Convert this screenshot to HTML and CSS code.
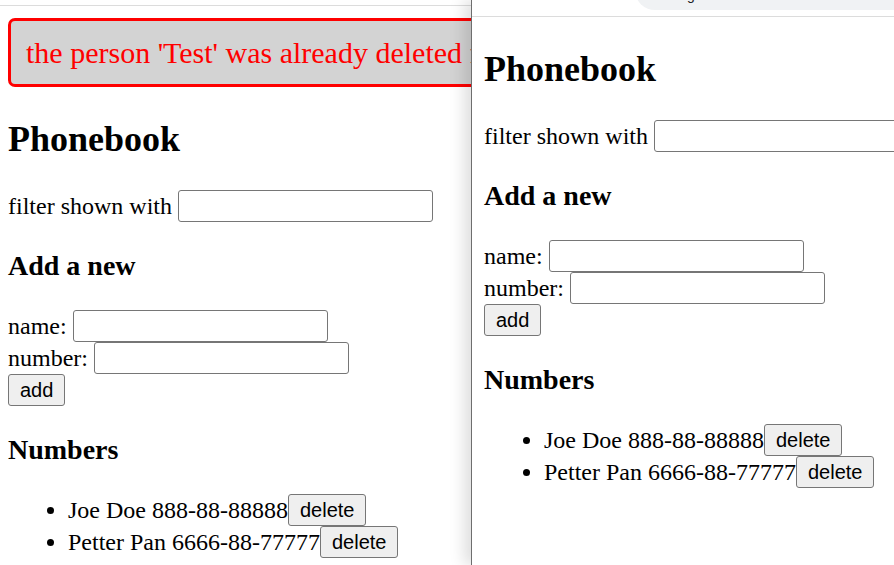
FILE: index.html
```html
<!DOCTYPE html>
<html lang="en">
<head>
<meta charset="utf-8">
<title>Phonebook</title>
<link rel="stylesheet" href="styles.css">
</head>
<body>
<div class="desk">
  <section class="win win-left">
    <div class="bar bar-left"></div>
    <main class="page page-left">
      <div class="error">the person 'Test' was already deleted from server</div>
      <h2>Phonebook</h2>
      <div class="row filter"><span>filter shown with</span><input class="field" type="text"></div>
      <h3>Add a new</h3>
      <form class="form">
        <div class="row"><span>name:</span><input class="field" type="text"></div>
        <div class="row"><span>number:</span><input class="field" type="text"></div>
        <div class="row"><button class="btn" type="button">add</button></div>
      </form>
      <h3>Numbers</h3>
      <ul class="list">
        <li><div class="item"><span>Joe Doe 888-88-88888</span><button class="btn" type="button">delete</button></div></li>
        <li><div class="item"><span>Petter Pan 6666-88-77777</span><button class="btn" type="button">delete</button></div></li>
      </ul>
    </main>
  </section>

  <section class="win win-right">
    <div class="bar bar-right">
      <div class="omnibox"><span class="url">g</span></div>
    </div>
    <main class="page page-right">
      <h2>Phonebook</h2>
      <div class="row filter"><span>filter shown with</span><input class="field" type="text"></div>
      <h3>Add a new</h3>
      <form class="form">
        <div class="row"><span>name:</span><input class="field" type="text"></div>
        <div class="row"><span>number:</span><input class="field" type="text"></div>
        <div class="row"><button class="btn" type="button">add</button></div>
      </form>
      <h3>Numbers</h3>
      <ul class="list">
        <li><div class="item"><span>Joe Doe 888-88-88888</span><button class="btn" type="button">delete</button></div></li>
        <li><div class="item"><span>Petter Pan 6666-88-77777</span><button class="btn" type="button">delete</button></div></li>
      </ul>
    </main>
  </section>
</div>
</body>
</html>
```

FILE: styles.css
```css
* { box-sizing: border-box; }

html, body {
  margin: 0;
  padding: 0;
  background: #ffffff;
}

body {
  font-family: "Liberation Serif", "Times New Roman", serif;
  font-size: 24px;
  color: #000;
}

.desk {
  position: relative;
  width: 894px;
  height: 565px;
  overflow: hidden;
}

.win {
  position: absolute;
  top: 0;
  height: 565px;
  background: #fff;
  overflow: hidden;
}

.win-left {
  left: -4px;
  width: 510px;
}

.win-right {
  left: 471px;
  width: 423px;
  border-left: 1px solid #6e6e6e;
  box-shadow: -7px 0 14px rgba(0, 0, 0, 0.13);
  z-index: 2;
}

.bar {
  position: relative;
  background: #fff;
  border-bottom: 1px solid #dcdcdc;
}

.bar-left { height: 6px; }

.bar-right { height: 17px; }

.omnibox {
  position: absolute;
  left: 163px;
  top: -30px;
  width: 400px;
  height: 40px;
  border-radius: 20px;
  background: #f0f2f4;
}

.url {
  position: absolute;
  left: 52px;
  top: 18px;
  font-family: "Liberation Sans", Arial, sans-serif;
  font-size: 14px;
  line-height: 14px;
  color: #202124;
}

.page { padding: 0 12px; }

.page-left { padding-top: 12px; }

.error {
  color: #f00;
  background: #d3d3d3;
  font-size: 30px;
  line-height: 33px;
  border: 3px solid #f00;
  border-radius: 7px;
  padding: 15px;
  margin: 0 0 15px;
  white-space: nowrap;
  overflow: hidden;
}

h2 {
  font-size: 36px;
  line-height: 45px;
  font-weight: bold;
  margin: 30px 0 28px;
}

h3 {
  font-size: 28px;
  line-height: 32px;
  font-weight: bold;
  margin: 28px 0;
}

.row {
  display: flex;
  align-items: center;
  gap: 6px;
  height: 32px;
  line-height: 32px;
  white-space: nowrap;
}

.form { margin: 0; }

.field {
  flex: none;
  width: 255px;
  height: 32px;
  margin: 0;
  padding: 0 3px;
  border: 1px solid #767676;
  border-radius: 3px;
  background: #fff;
  font-family: "Liberation Sans", Arial, sans-serif;
  font-size: 20px;
}

.btn {
  flex: none;
  height: 32px;
  margin: 0;
  padding: 0 11px;
  border: 1px solid #767676;
  border-radius: 3px;
  background: #efefef;
  color: #000;
  font-family: "Liberation Sans", Arial, sans-serif;
  font-size: 20px;
  line-height: 30px;
}

.list {
  margin: 28px 0 0;
  padding-left: 60px;
}

.list li { height: 32px; }

.item {
  display: flex;
  align-items: center;
  height: 32px;
  line-height: 32px;
  white-space: nowrap;
}
```
